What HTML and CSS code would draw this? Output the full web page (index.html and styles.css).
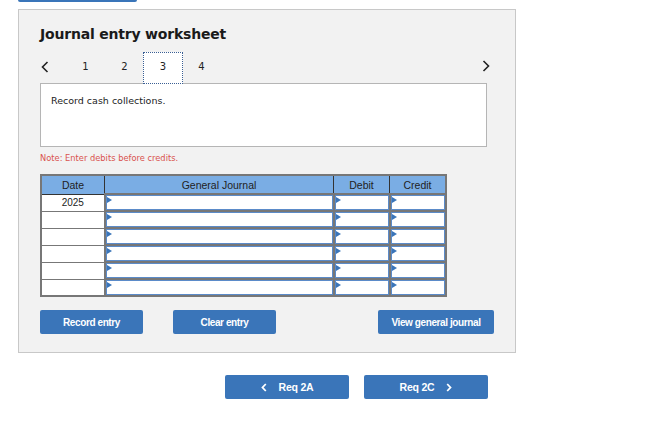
FILE: index.html
```html
<!DOCTYPE html>
<html lang="en">
<head>
<meta charset="UTF-8">
<meta name="viewport" content="width=device-width, initial-scale=1.0">
<link rel="stylesheet" href="styles.css">
</head>
<body>
    <div class="top-bar"></div>

    <div class="panel">
        <h2 class="title">Journal entry worksheet</h2>

        <div class="tabs">
            <span class="tab-arrow">
                <svg width="8" height="12" viewBox="0 0 8 12"><polyline points="6.5,1 1.5,6 6.5,11" fill="none" stroke="#222" stroke-width="1.6"/></svg>
            </span>
            <span class="tab">1</span>
            <span class="tab">2</span>
            <span class="tab active">3</span>
            <span class="tab">4</span>
            <span class="tab-arrow right">
                <svg width="8" height="12" viewBox="0 0 8 12"><polyline points="1.5,1 6.5,6 1.5,11" fill="none" stroke="#222" stroke-width="1.6"/></svg>
            </span>
        </div>

        <div class="prompt">Record cash collections.</div>

        <p class="note">Note: Enter debits before credits.</p>

        <table class="journal">
            <thead>
                <tr>
                    <th class="col-date">Date</th>
                    <th class="col-account">General Journal</th>
                    <th class="col-debit">Debit</th>
                    <th class="col-credit">Credit</th>
                </tr>
            </thead>
            <tbody>
                <tr>
                    <td class="date">2025</td>
                    <td class="entry"><div class="field"></div></td>
                    <td class="entry"><div class="field"></div></td>
                    <td class="entry"><div class="field"></div></td>
                </tr>
                <tr>
                    <td class="date"></td>
                    <td class="entry"><div class="field"></div></td>
                    <td class="entry"><div class="field"></div></td>
                    <td class="entry"><div class="field"></div></td>
                </tr>
                <tr>
                    <td class="date"></td>
                    <td class="entry"><div class="field"></div></td>
                    <td class="entry"><div class="field"></div></td>
                    <td class="entry"><div class="field"></div></td>
                </tr>
                <tr>
                    <td class="date"></td>
                    <td class="entry"><div class="field"></div></td>
                    <td class="entry"><div class="field"></div></td>
                    <td class="entry"><div class="field"></div></td>
                </tr>
                <tr>
                    <td class="date"></td>
                    <td class="entry"><div class="field"></div></td>
                    <td class="entry"><div class="field"></div></td>
                    <td class="entry"><div class="field"></div></td>
                </tr>
                <tr>
                    <td class="date"></td>
                    <td class="entry"><div class="field"></div></td>
                    <td class="entry"><div class="field"></div></td>
                    <td class="entry"><div class="field"></div></td>
                </tr>
            </tbody>
        </table>

        <div class="actions">
            <button class="btn">Record entry</button>
            <button class="btn">Clear entry</button>
            <button class="btn wide">View general journal</button>
        </div>
    </div>

    <div class="req-nav">
        <button class="btn req">
            <svg class="chev" width="6" height="9" viewBox="0 0 6 9"><polyline points="4.8,1 1.5,4.5 4.8,8" fill="none" stroke="#fff" stroke-width="1.8"/></svg>
            <span>Req 2A</span>
        </button>
        <button class="btn req">
            <span>Req 2C</span>
            <svg class="chev" width="6" height="9" viewBox="0 0 6 9"><polyline points="1.2,1 4.5,4.5 1.2,8" fill="none" stroke="#fff" stroke-width="1.8"/></svg>
        </button>
    </div>
</body>
</html>
```

FILE: styles.css
```css
body {
    margin: 0;
    background-color: #ffffff;
    font-family: "DejaVu Sans", Verdana, sans-serif;
    color: #222;
}

.top-bar {
    width: 119px;
    height: 2px;
    margin-left: 18px;
    background-color: #3a75b9;
    border-radius: 0 0 2px 2px;
}

.panel {
    width: 454px;
    height: 320px;
    margin: 7px 0 0 18px;
    padding: 14px 21px 8px 21px;
    background-color: #f2f2f2;
    border: 1px solid #c8c8c8;
}

.title {
    margin: 0;
    font-size: 14px;
    font-weight: bold;
    line-height: 20px;
    color: #1a1a1a;
    letter-spacing: -0.2px;
}

/* Step tabs */
.tabs {
    display: flex;
    align-items: stretch;
    height: 32px;
    margin-top: 8px;
    width: 450px;
    position: relative;
    z-index: 1;
}

.tab-arrow {
    width: 26px;
    padding-top: 6px;
    padding-left: 1px;
    box-sizing: border-box;
}

.tab-arrow.right {
    margin-left: auto;
    width: auto;
    padding-left: 0;
    padding-top: 5px;
}

.tab {
    width: 39px;
    text-align: center;
    font-size: 10px;
    line-height: 29px;
    box-sizing: border-box;
}

.tab.active {
    width: 40px;
    margin-left: -1px;
    margin-right: -1px;
    background-color: #ffffff;
    border: 1px dotted #3a5f94;
    line-height: 28px;
}

.prompt {
    width: 425px;
    height: 52px;
    margin-top: -1px;
    padding: 5px 10px;
    background-color: #ffffff;
    border: 1px solid #b5b5b5;
    font-size: 9.5px;
    line-height: 24px;
}

.note {
    margin: 6px 0 0 0;
    font-size: 8.3px;
    line-height: 10px;
    color: #d9534f;
}

/* Journal table */
.journal {
    margin-top: 11px;
    border-collapse: collapse;
    border: 2px solid #777;
    font-family: "Liberation Sans", Arial, sans-serif;
    font-size: 10.5px;
}

.journal th {
    height: 17px;
    padding: 0;
    background-color: #7aade4;
    font-weight: normal;
    color: #222;
    border: 1px solid #333;
    border-top: 2px solid #777;
}

.col-date { width: 62px; }
.col-account { width: 228px; }
.col-debit { width: 55px; }
.col-credit { width: 55px; }

.journal td {
    height: 15px;
    padding: 0;
    border: 1px solid #777;
    background-color: #ffffff;
}

.journal td.date {
    text-align: center;
    font-size: 10px;
    color: #222;
}

.journal td.entry {
    border: 2px solid #777;
}

.field {
    height: 13px;
    border: 1px solid #5b8bc9;
    background-color: #ffffff;
    position: relative;
}

.field::before {
    content: "";
    position: absolute;
    left: 0;
    top: 1px;
    border-top: 3px solid transparent;
    border-bottom: 3px solid transparent;
    border-left: 5px solid #3a75b9;
}

/* Buttons */
.actions {
    display: flex;
    margin-top: 13px;
}

.btn {
    height: 24px;
    width: 103px;
    border: none;
    border-radius: 2px;
    background-color: #3a75b9;
    color: #ffffff;
    font-family: "Liberation Sans", Arial, sans-serif;
    font-weight: bold;
    font-size: 10px;
    letter-spacing: -0.4px;
    padding: 0;
}

.actions .btn + .btn {
    margin-left: 30px;
}

.actions .btn.wide {
    width: 116px;
    margin-left: auto;
    margin-right: 0;
}

.req-nav {
    display: flex;
    gap: 15px;
    margin: 22px 0 0 225px;
}

.btn.req {
    width: 124px;
    display: flex;
    align-items: center;
    justify-content: center;
    gap: 12px;
    font-size: 10.5px;
    letter-spacing: -0.2px;
}
```
